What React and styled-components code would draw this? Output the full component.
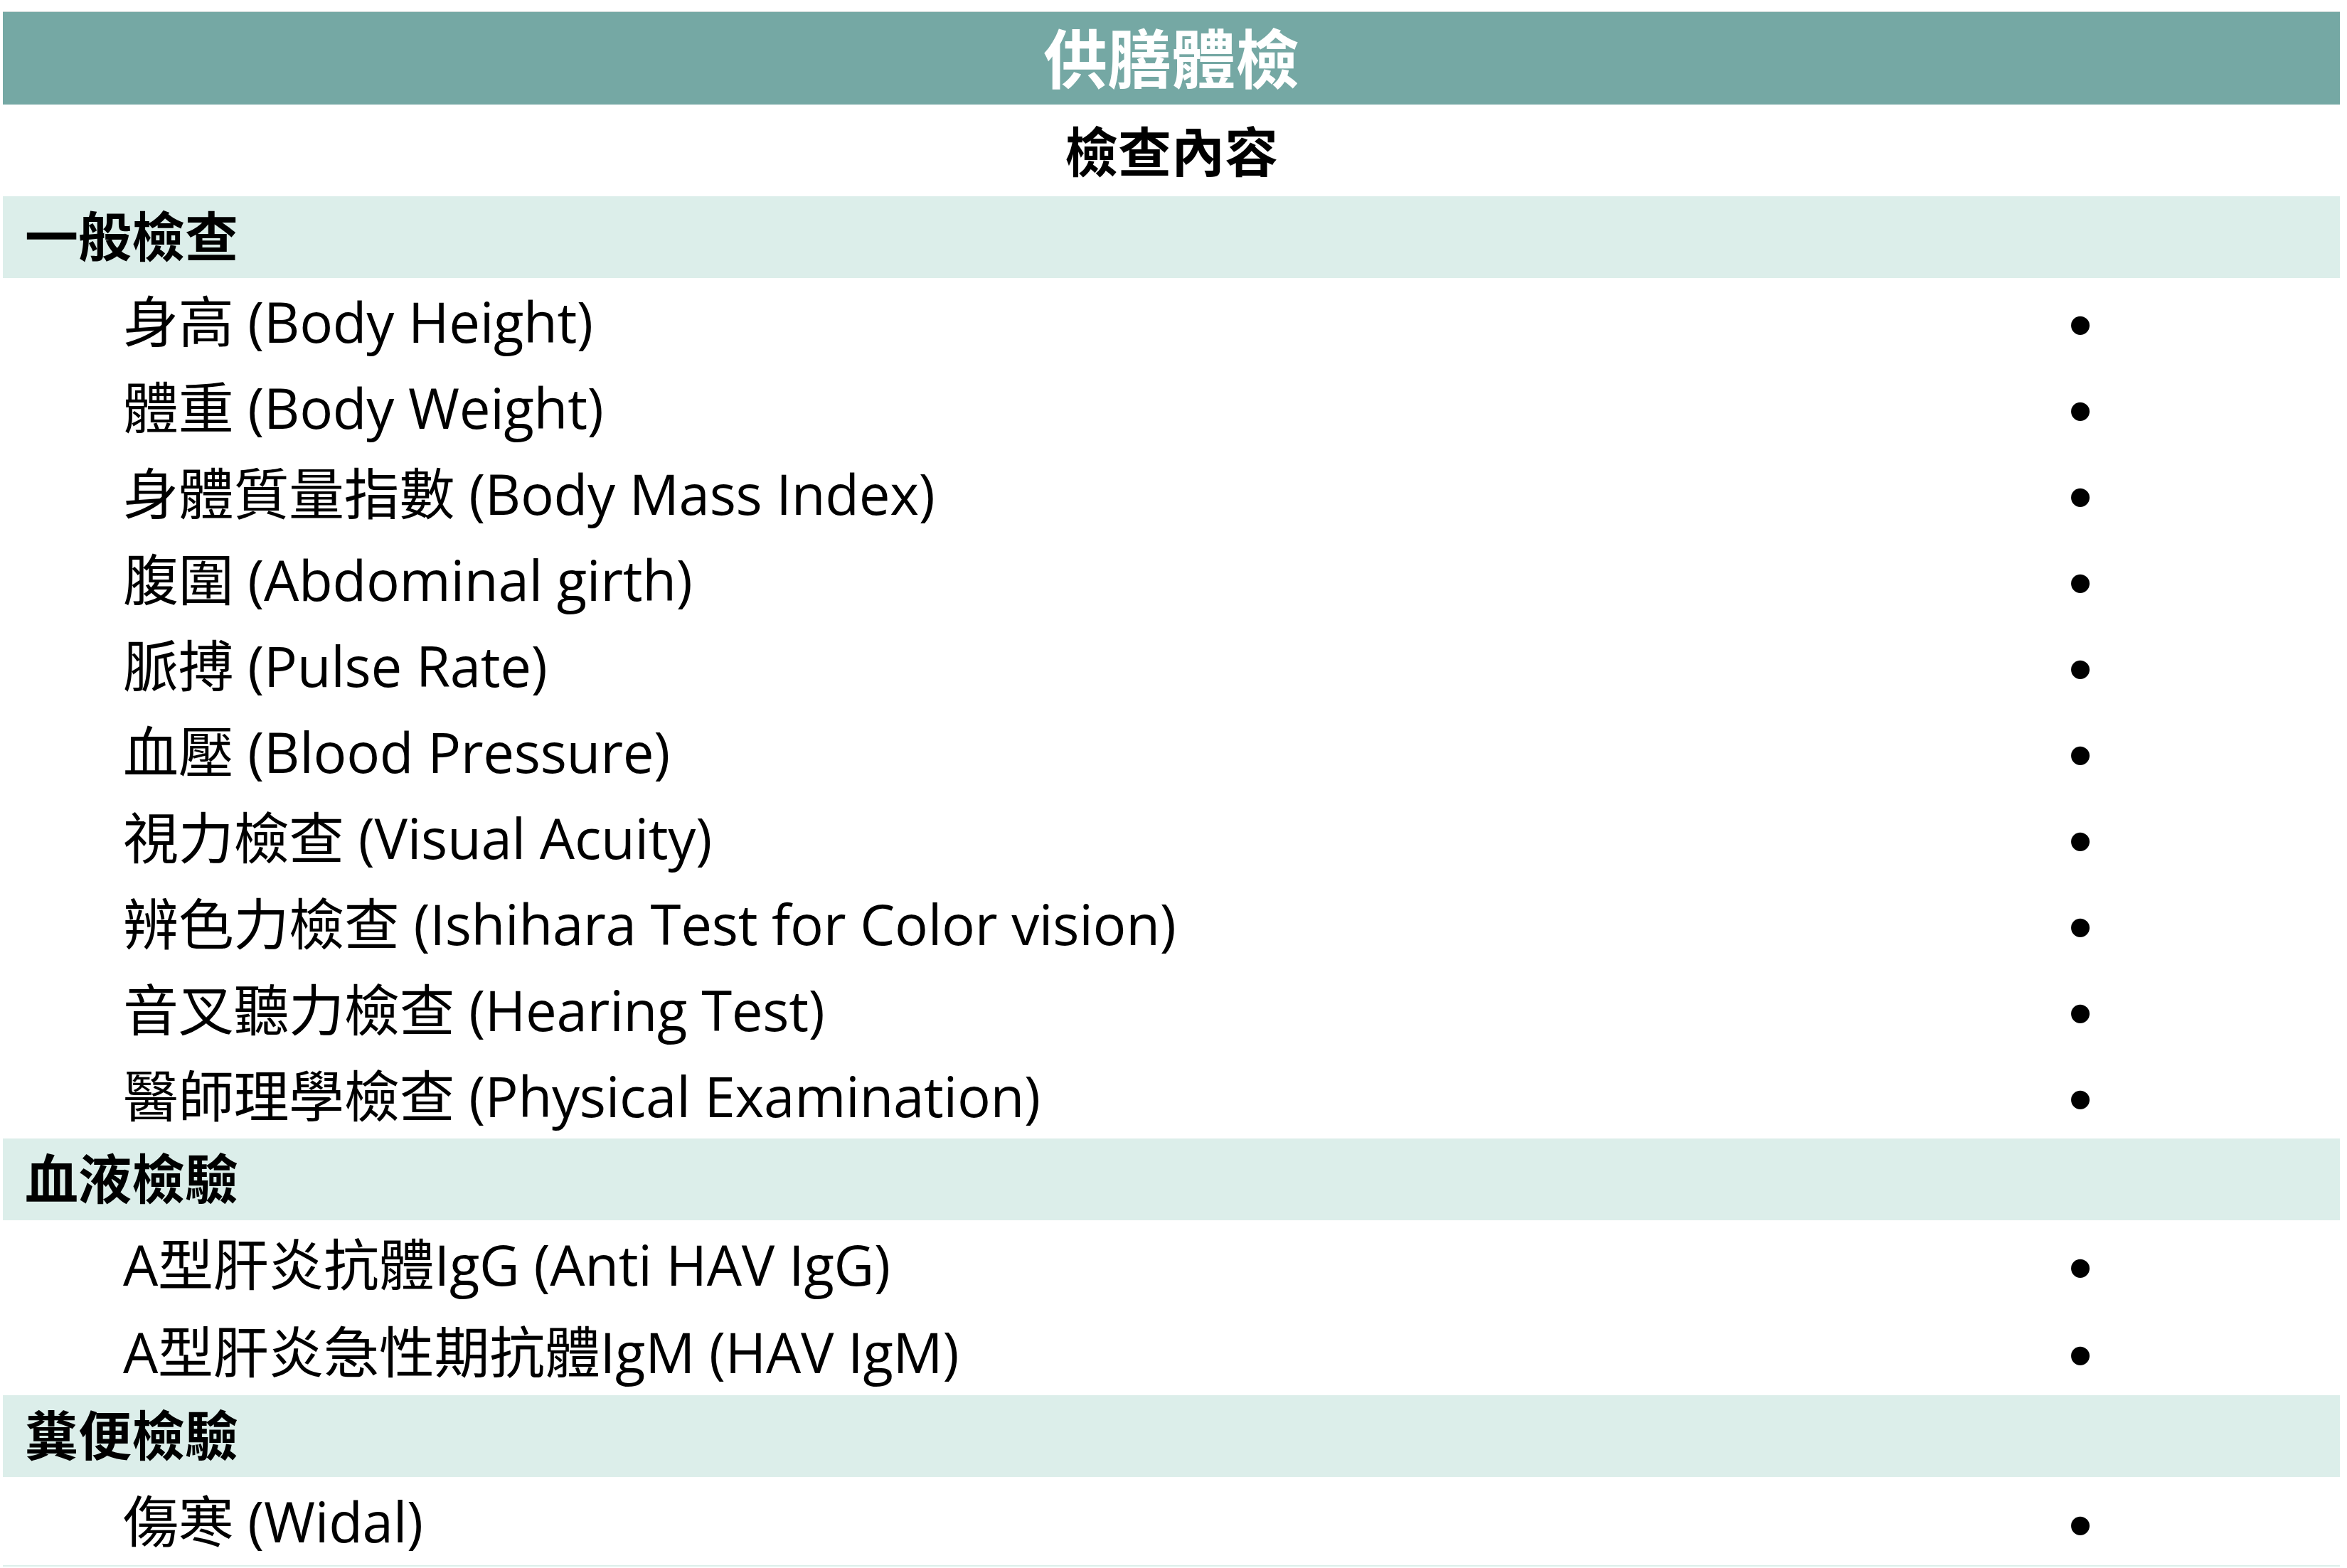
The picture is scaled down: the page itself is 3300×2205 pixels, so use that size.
import React from "react";
import styled, { createGlobalStyle } from "styled-components";

const GlobalStyle = createGlobalStyle`
  html, body {
    margin: 0;
    padding: 0;
    background: #ffffff;
  }
  body {
    font-family: "Open Sans", "Noto Sans CJK TC", sans-serif;
    color: #000000;
  }
`;

const Page = styled.div`
  padding: 16px 10px 0 4px;
`;

const Table = styled.div`
  display: flex;
  flex-direction: column;
  border-bottom: 2px solid #dcefea;
`;

const TitleBar = styled.div`
  height: 131px;
  box-sizing: border-box;
  border-top: 1px solid #c9d6d4;
  padding-bottom: 8px;
  background: #75a8a4;
  color: #ffffff;
  display: flex;
  align-items: center;
  justify-content: center;
  font-family: "Noto Sans CJK TC", sans-serif;
  font-weight: 700;
  font-size: 90px;
  line-height: 1;
`;

const SubHeader = styled.div`
  height: 129px;
  box-sizing: border-box;
  padding-bottom: 4px;
  display: flex;
  align-items: center;
  justify-content: center;
  font-family: "Noto Sans CJK TC", sans-serif;
  font-weight: 700;
  font-size: 75px;
  line-height: 1;
`;

const CategoryRow = styled.div`
  height: 115px;
  box-sizing: border-box;
  padding-bottom: 10px;
  background: #dceeea;
  display: flex;
  align-items: center;
  padding-left: 31px;
  font-family: "Noto Sans CJK TC", sans-serif;
  font-weight: 700;
  font-size: 75px;
  line-height: 1;
`;

const ItemRow = styled.div`
  height: ${(p) => p.$h}px;
  display: grid;
  grid-template-columns: 1fr 730px;
  align-items: center;
  padding-left: 169px;
`;

const ItemText = styled.span`
  font-family: "Open Sans", "Noto Sans CJK TC", sans-serif;
  font-size: 78px;
  letter-spacing: -0.3px;
  line-height: 1;
  white-space: nowrap;
`;

const Bullet = styled.span`
  justify-self: center;
  font-family: "Liberation Sans", sans-serif;
  font-size: 96px;
  line-height: 0.8;
  padding-top: 12px;
`;

const groups = [
  {
    title: "一般檢查",
    h: 121,
    items: [
      "身高 (Body Height)",
      "體重 (Body Weight)",
      "身體質量指數 (Body Mass Index)",
      "腹圍 (Abdominal girth)",
      "脈搏 (Pulse Rate)",
      "血壓 (Blood Pressure)",
      "視力檢查 (Visual Acuity)",
      "辨色力檢查 (Ishihara Test for Color vision)",
      "音叉聽力檢查 (Hearing Test)",
      "醫師理學檢查 (Physical Examination)",
    ],
  },
  {
    title: "血液檢驗",
    h: 123,
    items: ["A型肝炎抗體IgG (Anti HAV IgG)", "A型肝炎急性期抗體IgM (HAV IgM)"],
  },
  {
    title: "糞便檢驗",
    h: 124,
    items: ["傷寒 (Widal)"],
  },
];

export default function App() {
  return (
    <>
      <GlobalStyle />
      <Page>
        <Table>
          <TitleBar>供膳體檢</TitleBar>
          <SubHeader>檢查內容</SubHeader>
          {groups.map((g) => (
            <React.Fragment key={g.title}>
              <CategoryRow>{g.title}</CategoryRow>
              {g.items.map((it) => (
                <ItemRow key={it} $h={g.h}>
                  <ItemText>{it}</ItemText>
                  <Bullet>•</Bullet>
                </ItemRow>
              ))}
            </React.Fragment>
          ))}
        </Table>
      </Page>
    </>
  );
}
